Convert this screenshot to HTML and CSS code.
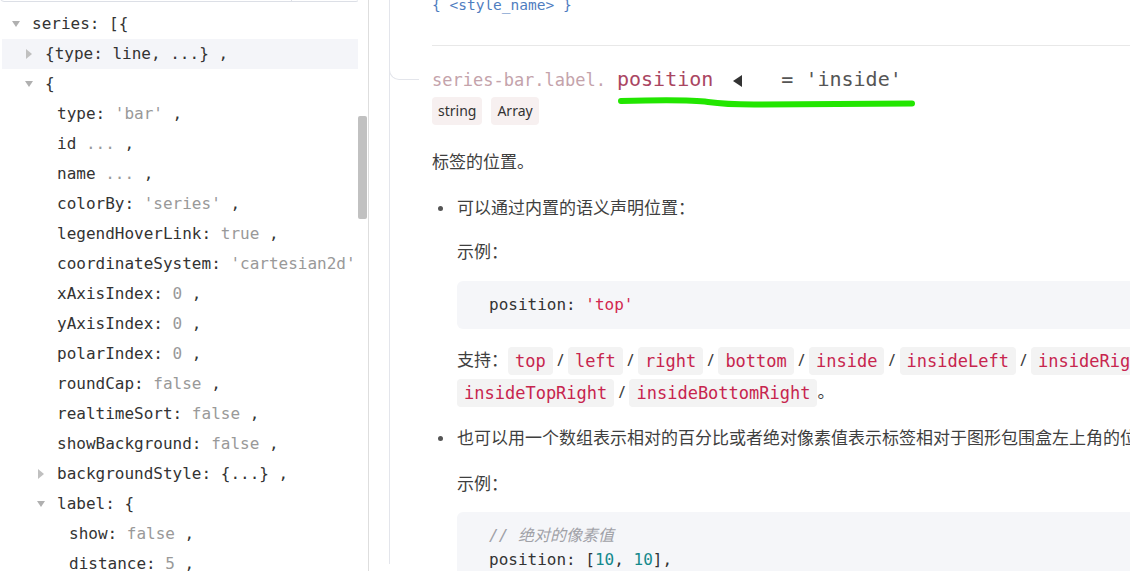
FILE: index.html
```html
<!DOCTYPE html>
<html lang="zh-CN">
<head>
    <meta charset="UTF-8">
    <meta name="viewport" content="width=device-width, initial-scale=1.0">
    <title>series-bar.label.position</title>
    <link rel="stylesheet" href="styles.css">
</head>
<body>
    <div class="page">
        <aside class="sidebar">
            <div class="tree-wrap">
                <div class="search"><span class="search-btn"></span></div>
                <div class="tree">
                    <div class="row lv0"><span class="tg down"></span>series: [{</div>
                    <div class="row lv1 active"><span class="tg right"></span>{type: line, ...} ,</div>
                    <div class="row lv1"><span class="tg down"></span>{</div>
                    <div class="row lv2"><span class="tg"></span>type: <span class="v">'bar'</span> ,</div>
                    <div class="row lv2"><span class="tg"></span>id <span class="v">...</span> ,</div>
                    <div class="row lv2"><span class="tg"></span>name <span class="v">...</span> ,</div>
                    <div class="row lv2"><span class="tg"></span>colorBy: <span class="v">'series'</span> ,</div>
                    <div class="row lv2"><span class="tg"></span>legendHoverLink: <span class="v">true</span> ,</div>
                    <div class="row lv2"><span class="tg"></span>coordinateSystem: <span class="v">'cartesian2d'</span> ,</div>
                    <div class="row lv2"><span class="tg"></span>xAxisIndex: <span class="v">0</span> ,</div>
                    <div class="row lv2"><span class="tg"></span>yAxisIndex: <span class="v">0</span> ,</div>
                    <div class="row lv2"><span class="tg"></span>polarIndex: <span class="v">0</span> ,</div>
                    <div class="row lv2"><span class="tg"></span>roundCap: <span class="v">false</span> ,</div>
                    <div class="row lv2"><span class="tg"></span>realtimeSort: <span class="v">false</span> ,</div>
                    <div class="row lv2"><span class="tg"></span>showBackground: <span class="v">false</span> ,</div>
                    <div class="row lv2"><span class="tg right"></span>backgroundStyle: {...} ,</div>
                    <div class="row lv2"><span class="tg down"></span>label: {</div>
                    <div class="row lv3"><span class="tg"></span>show: <span class="v">false</span> ,</div>
                    <div class="row lv3"><span class="tg"></span>distance: <span class="v">5</span> ,</div>
                </div>
            </div>
            <div class="scroll"><div class="thumb"></div></div>
        </aside>

        <main class="main">
            <div class="doc">
                <div class="prev">
                    <div class="prev-code">{ &lt;style_name&gt; }</div>
                    <div class="sep"></div>
                </div>

                <div class="prop-title">
                    <span class="prefix">series-bar.label.</span><span class="name">position</span><span class="arrow"></span><span class="default">= 'inside'</span>
                    <svg class="mark" width="500" height="50" viewBox="0 0 500 50">
                        <path d="M189 36 C 228 35, 262 35, 276 37 S 300 39.5, 322 39.5 L 480 38.5" fill="none" stroke="#22e600" stroke-width="6" stroke-linecap="round"/>
                    </svg>
                </div>
                <div class="types">
                    <span class="tag">string</span>
                    <span class="tag">Array</span>
                </div>

                <p class="desc">标签的位置。</p>

                <ul class="opts">
                    <li class="opt first">
                        <div class="body">
                            <p>可以通过内置的语义声明位置：</p>
                            <p class="ex">示例：</p>
                            <pre class="code">position: <span class="str">'top'</span></pre>
                            <p class="support">支持：<code class="ic">top</code> / <code class="ic">left</code> / <code class="ic">right</code> / <code class="ic">bottom</code> / <code class="ic">inside</code> / <code class="ic">insideLeft</code> / <code class="ic">insideRight</code> / <code class="ic">insideTop</code> / <code class="ic">insideBottom</code> / <code class="ic">insideTopLeft</code> / <code class="ic">insideBottomLeft</code> /<br><code class="ic">insideTopRight</code> / <code class="ic">insideBottomRight</code>。</p>
                        </div>
                    </li>
                    <li class="opt second">
                        <div class="body">
                            <p>也可以用一个数组表示相对的百分比或者绝对像素值表示标签相对于图形包围盒左上角的位置。</p>
                            <p class="ex ex2">示例：</p>
                            <pre class="code code2"><span class="cm">// 绝对的像素值</span>
position: [<span class="num">10</span>, <span class="num">10</span>],
<span class="cm">// 相对的百分比</span>
position: [<span class="str">'50%'</span>, <span class="str">'50%'</span>]</pre>
                        </div>
                    </li>
                </ul>
            </div>
        </main>
    </div>
</body>
</html>
```

FILE: styles.css
```css
*{
    margin: 0;
    padding: 0;
    box-sizing: border-box;
}
body{
    font-family: "Noto Sans", "Noto Sans CJK SC", sans-serif;
    color: #3f3f3f;
    background: #fff;
    height: 571px;
    overflow: hidden;
}
.page{
    display: flex;
    height: 571px;
}

/* left option tree */
.sidebar{
    width: 369px;
    flex-shrink: 0;
    display: flex;
    border-right: 1px solid #dedede;
    overflow: hidden;
}
.tree-wrap{
    width: 358px;
    overflow: hidden;
}
.search{
    width: 360px;
    height: 31px;
    margin-top: -29px;
    border: 1px solid #dcdfe6;
    border-radius: 4px;
    display: flex;
    justify-content: flex-end;
}
.search-btn{
    width: 68px;
    border-left: 1px solid #dcdfe6;
}
.tree{
    margin-top: 7px;
    padding-left: 2px;
    font-family: "DejaVu Sans Mono", monospace;
    font-size: 16px;
    color: #333;
}
.row{
    height: 30px;
    line-height: 30px;
    white-space: pre;
    width: 356px;
}
.row.active{
    background: #f4f5f9;
}
.lv0{ padding-left: 8px; }
.lv1{ padding-left: 21px; }
.lv2{ padding-left: 33px; }
.lv3{ padding-left: 45px; }
.tg{
    display: inline-flex;
    width: 12px;
    height: 30px;
    margin-right: 10px;
    vertical-align: top;
    align-items: center;
    justify-content: center;
}
.tg.down::before{
    content: "";
    border-left: 4.5px solid transparent;
    border-right: 4.5px solid transparent;
    border-top: 6px solid #b0b0b0;
}
.tg.right::before{
    content: "";
    border-top: 5px solid transparent;
    border-bottom: 5px solid transparent;
    border-left: 6px solid #c0c0c0;
}
.v{
    color: #999;
}
.scroll{
    width: 10px;
}
.thumb{
    margin-top: 116px;
    width: 9px;
    height: 103px;
    background: #c1c1c1;
    border-radius: 2px;
}

/* right doc */
.main{
    flex: 1;
    overflow: hidden;
    padding-left: 20px;
}
.doc{
    width: 1000px;
    height: 571px;
    border-left: 1px solid #e3e5eb;
    padding-left: 42px;
}
.prev-code{
    margin-top: -7px;
    font-family: "DejaVu Sans Mono", monospace;
    font-size: 14.5px;
    line-height: 24px;
    color: #4f7dbf;
}
.sep{
    margin-top: 28px;
    border-top: 1px solid #e8e8e8;
}
.prop-title{
    position: relative;
    margin-top: 19px;
    height: 28px;
    line-height: 28px;
    white-space: nowrap;
    font-family: "DejaVu Sans Mono", monospace;
}
.prop-title::before{
    content: "";
    position: absolute;
    left: -43px;
    top: -10px;
    width: 29px;
    height: 24px;
    border-left: 1px solid #e3e5eb;
    border-bottom: 1px solid #e3e5eb;
    border-bottom-left-radius: 10px;
}
.prefix{
    font-size: 17px;
    color: #c4a3ab;
}
.name{
    margin-left: 11px;
    font-size: 20px;
    color: #aa4662;
}
.arrow{
    display: inline-block;
    margin: 0 39px 0 20px;
    border-top: 6px solid transparent;
    border-bottom: 6px solid transparent;
    border-right: 9px solid #333;
    vertical-align: -1px;
}
.default{
    font-size: 20px;
    color: #555;
}
.mark{
    position: absolute;
    left: 0;
    top: 0;
    overflow: visible;
    pointer-events: none;
}
.types{
    margin-top: 4px;
    display: flex;
    gap: 9px;
}
.tag{
    height: 28px;
    line-height: 28px;
    padding: 0 6px;
    font-size: 14px;
    color: #333;
    background: #f7f0f0;
    border-radius: 4px;
}
.desc{
    margin-top: 25px;
    font-size: 17px;
    line-height: 24px;
}
.opts{
    list-style: none;
    font-size: 17px;
    line-height: 24px;
}
.opt{
    display: grid;
    grid-template-columns: 25px 1fr;
}
.opt::before{
    content: "";
    width: 5px;
    height: 5px;
    margin: 10px 0 0 6px;
    border-radius: 50%;
    background: #555;
}
.opt.first{ margin-top: 22px; }
.opt.second{ margin-top: 18px; }
.body p{
    white-space: nowrap;
}
.ex{ margin-top: 20px; }
.ex2{ margin-top: 22px; }
.code{
    margin-top: 17px;
    padding: 12px 32px;
    background: #f5f6f9;
    border-radius: 6px;
    font-family: "DejaVu Sans Mono", "Noto Sans CJK SC", monospace;
    font-size: 16px;
    line-height: 24px;
    color: #333;
}
.code2{ margin-top: 16px; }
.str{ color: #d2284f; }
.num{ color: #14898c; }
.cm{
    color: #a0a1a7;
    font-style: italic;
}
.support{
    margin-top: 15px;
    line-height: 32px;
}
.ic{
    display: inline-block;
    height: 28px;
    line-height: 28px;
    padding: 0 7px;
    font-family: "DejaVu Sans Mono", monospace;
    font-size: 17px;
    color: #c7254e;
    background: #f3f3f3;
    border-radius: 4px;
    vertical-align: middle;
}
```
